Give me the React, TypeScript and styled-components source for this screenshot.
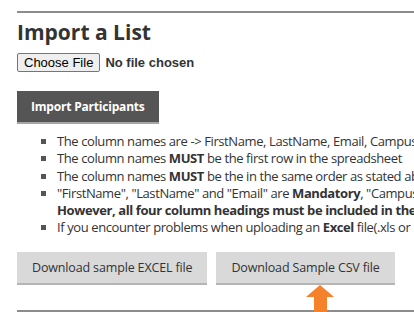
import React from 'react';
import styled, { createGlobalStyle } from 'styled-components';

const GlobalStyle = createGlobalStyle`
  html, body {
    margin: 0;
    padding: 0;
    background: #fff;
    overflow: hidden;
  }
  body {
    font-family: "Open Sans", "Liberation Sans", sans-serif;
    color: #333;
  }
`;

const Page = styled.section`
  width: 640px;
  padding: 11px 0 0 17px;
`;

const Rule = styled.hr`
  border: 0;
  border-top: 2px solid #8c8c8c;
  margin: 0;
`;

const Title = styled.h2`
  font-size: 21px;
  font-weight: 700;
  margin: 5px 0 6px;
  line-height: 28px;
  color: #333;
`;

const FileRow = styled.div`
  font-family: "Liberation Sans", Arial, sans-serif;
  font-size: 13px;
  font-weight: 700;
  display: flex;
  align-items: center;
  height: 21px;

  input {
    font: inherit;
  }
  input::file-selector-button {
    font-family: "Liberation Sans", Arial, sans-serif;
    font-size: 13px;
    font-weight: 400;
    padding: 1px 6px;
    margin-right: 5px;
    border: 1px solid #767676;
    border-radius: 2px;
    background: #efefef;
    color: #000;
  }
`;

const ActionRow = styled.div`
  display: flex;
  margin-top: 18px;
`;

const Button = styled.button<{ $tone: 'dark' | 'light' }>`
  font-family: "Open Sans", "Liberation Sans", sans-serif;
  border: 0;
  border-bottom: 2px solid ${p => (p.$tone === 'dark' ? '#a6a6a6' : '#b5b5b5')};
  background: ${p => (p.$tone === 'dark' ? '#555' : '#d9d9d9')};
  color: ${p => (p.$tone === 'dark' ? '#fff' : '#333')};
  font-weight: ${p => (p.$tone === 'dark' ? 700 : 400)};
  font-size: ${p => (p.$tone === 'dark' ? '12px' : '12.5px')};
  letter-spacing: ${p => (p.$tone === 'dark' ? '-0.2px' : '-0.15px')};
  height: 33px;
  padding: 0 ${p => (p.$tone === 'dark' ? '14px' : '15px')};
  cursor: pointer;
`;

const List = styled.ul`
  list-style: square;
  margin: 9px 0 0;
  padding-left: 40px;
  font-size: 13px;
  line-height: 17.3px;
  white-space: nowrap;
  letter-spacing: -0.4px;

  li::marker {
    color: #555;
  }
`;

const ButtonRow = styled.div`
  display: flex;
  gap: 9px;
  margin-top: 15px;
`;

const Marked = styled.div`
  position: relative;
  display: flex;
`;

const Arrow = styled.svg`
  position: absolute;
  left: 89px;
  top: 100%;
`;

const Bottom = styled.div`
  margin-top: 25px;
`;

const App = () => {
  return (
    <>
      <GlobalStyle />
      <Page>
        <Rule />
        <Title>Import a List</Title>
        <FileRow>
          <input type="file" />
        </FileRow>
        <ActionRow>
          <Button $tone="dark">Import Participants</Button>
        </ActionRow>
        <List>
          <li>The column names are -&gt; FirstName, LastName, Email, Campus</li>
          <li>The column names <b>MUST</b> be the first row in the spreadsheet</li>
          <li>The column names <b>MUST</b> be the in the same order as stated above</li>
          <li>
            "FirstName", "LastName" and "Email" are <b>Mandatory</b>, "Campus" is optional.
            <br />
            <b>However, all four column headings must be included in the file.</b>
          </li>
          <li>If you encounter problems when uploading an <b>Excel</b> file(.xls or .xlsx), try the CSV file.</li>
        </List>
        <ButtonRow>
          <Button $tone="light">Download sample EXCEL file</Button>
          <Marked>
            <Button $tone="light">Download Sample CSV file</Button>
            <Arrow width="30" height="40" viewBox="0 0 30 40">
              <polygon points="15,0 29,12 22,12 22,40 9,40 9,12 1,12" fill="#f5822a" />
            </Arrow>
          </Marked>
        </ButtonRow>
        <Bottom>
          <Rule />
        </Bottom>
      </Page>
    </>
  );
};

export default App;
